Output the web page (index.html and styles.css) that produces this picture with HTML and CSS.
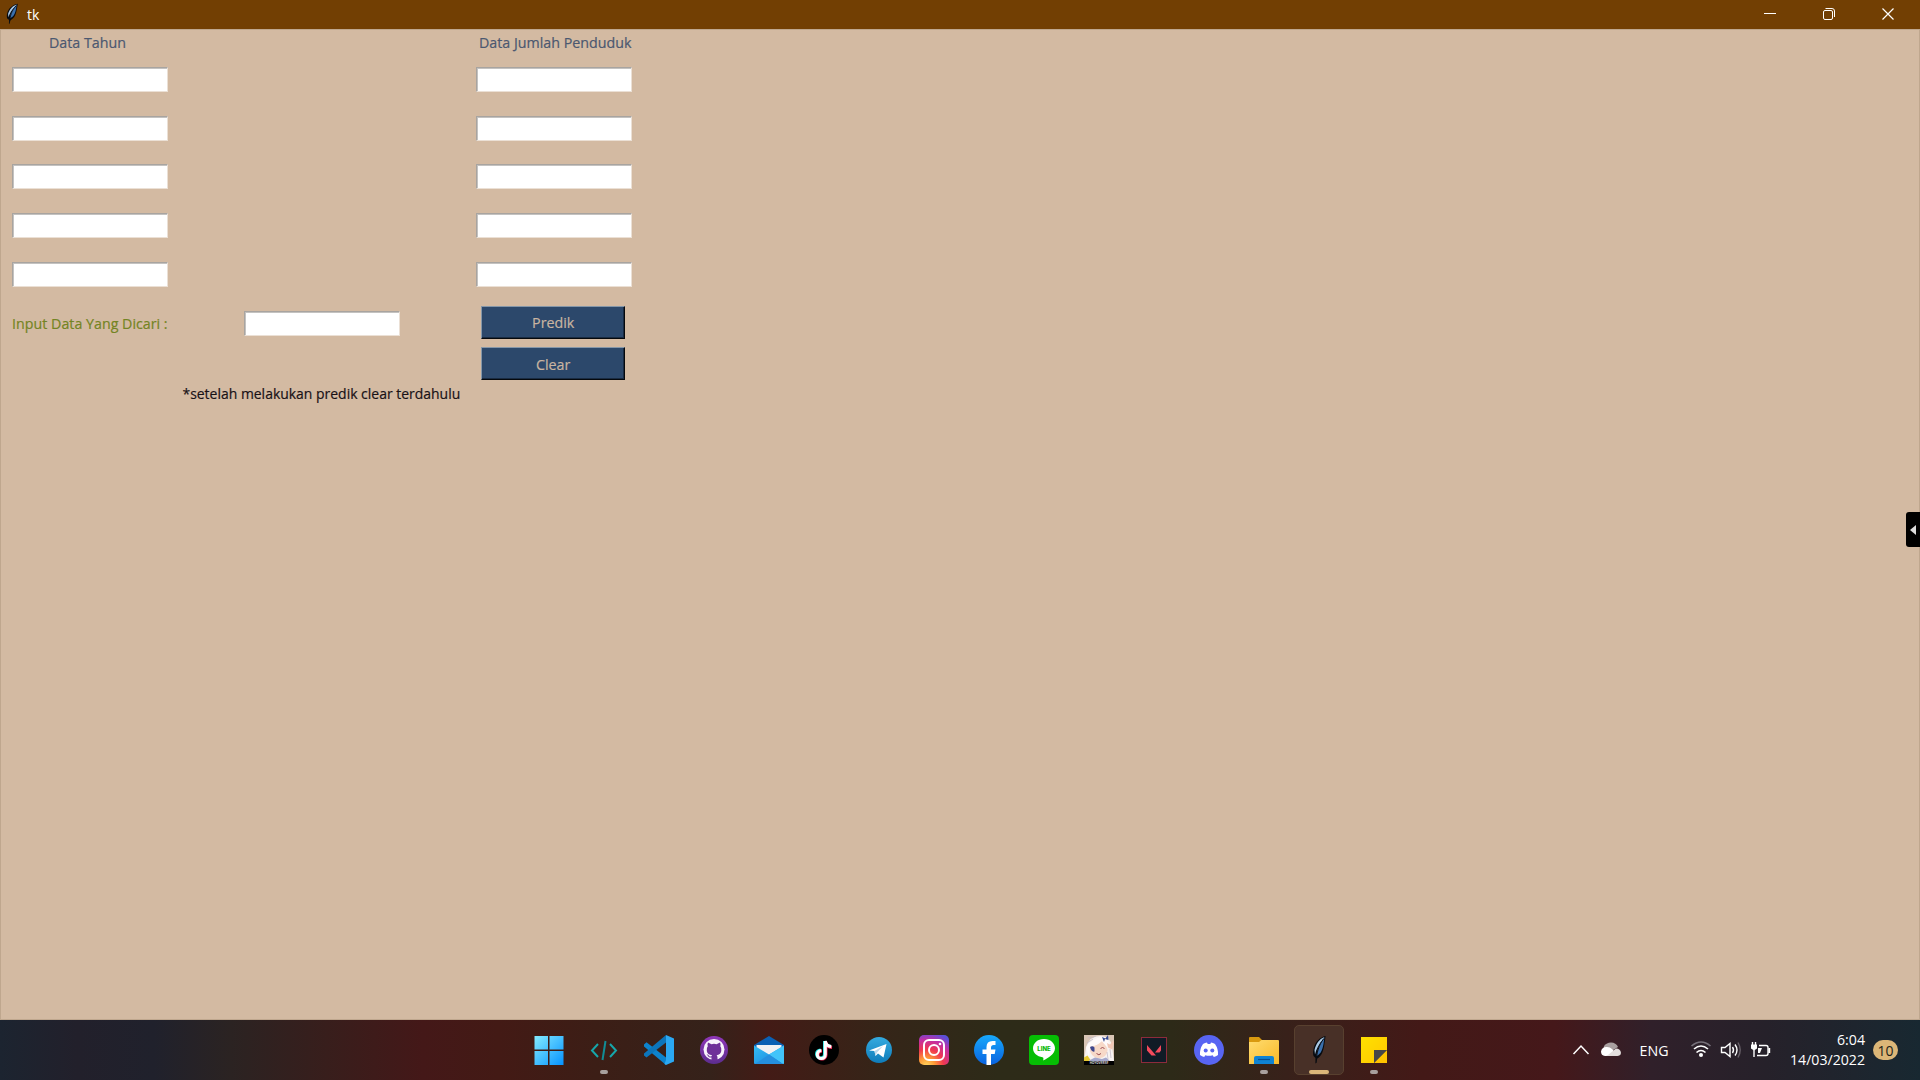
FILE: index.html
```html
<!DOCTYPE html>
<html lang="id">
<head>
<meta charset="utf-8">
<title>tk</title>
<link rel="stylesheet" href="styles.css">
</head>
<body>
<svg class="defs" width="0" height="0" aria-hidden="true">
  <defs>
    <linearGradient id="win" x1="0" y1="0" x2="1" y2="1"><stop offset="0" stop-color="#84ebff"/><stop offset="1" stop-color="#0592ff"/></linearGradient>
    <linearGradient id="purple" x1="0" y1="0" x2="0" y2="1"><stop offset="0" stop-color="#8f36b8"/><stop offset="1" stop-color="#5c2d8e"/></linearGradient>
    <linearGradient id="mailgrad" x1="0" y1="0" x2="1" y2="1"><stop offset="0" stop-color="#35bdf5"/><stop offset="1" stop-color="#1683dc"/></linearGradient>
    <linearGradient id="tele" x1="0" y1="0" x2="0" y2="1"><stop offset="0" stop-color="#33aadf"/><stop offset="1" stop-color="#0f7cba"/></linearGradient>
    <radialGradient id="insta" cx=".25" cy="1.05" r="1.15"><stop offset="0" stop-color="#ffdc62"/><stop offset=".25" stop-color="#ff9a36"/><stop offset=".5" stop-color="#f0394f"/><stop offset=".78" stop-color="#c22fa5"/><stop offset="1" stop-color="#5b4fd8"/></radialGradient>
    <linearGradient id="face" x1="0" y1="0" x2="0" y2="1"><stop offset="0" stop-color="#18a9fb"/><stop offset="1" stop-color="#0862e0"/></linearGradient>
    <linearGradient id="folder" x1="0" y1="0" x2="1" y2="1"><stop offset="0" stop-color="#ffdc70"/><stop offset="1" stop-color="#f9b928"/></linearGradient>
    <linearGradient id="note" x1="0" y1="0" x2="1" y2="1"><stop offset="0" stop-color="#ffe000"/><stop offset="1" stop-color="#ffc800"/></linearGradient>
    <symbol id="feather" viewBox="0 0 16 30">
      <path d="M14.600 1C9 2 4.500 7 3 12c-1 4-1.300 6-.5 9l2 2 .3 6 1.500-5.500C11 21 12.500 15 13.300 10z" fill="#080b10"/>
      <path d="M13.500 2C8 4 5 9 3.500 15l.5 4.500c1-5 4-11 8-15z" fill="#a9c8e4"/>
      <path d="M13.300 2.800C9 8 6.500 13 5.500 21c5-2 6.200-8 7-12z" fill="#3b70ad"/>
      <path d="M12.500 4C8 10 5.500 17 5 28" fill="none" stroke="#0a0d12" stroke-width="1"/>
    </symbol>
  </defs>
</svg>
<div class="desktop">
  <header class="titlebar">
    <svg class="app-icon" width="14" height="22" viewBox="0 0 16 30" preserveAspectRatio="none"><use href="#feather"/></svg>
    <span class="title">tk</span>
    <div class="controls">
      <svg class="control" viewBox="0 0 58 29"><path d="M22 13.500h12" stroke="#fff"/></svg>
      <svg class="control" viewBox="0 0 58 29"><rect x="22.500" y="10.500" width="9" height="9" rx="1.500" fill="none" stroke="#fff"/><path d="M24.500 8.500h6.500q2.500 0 2.500 2.500v6" fill="none" stroke="#fff"/></svg>
      <svg class="control" viewBox="0 0 58 29"><path d="M22.500 8.500l11 11m0-11l-11 11" stroke="#fff" stroke-width="1.200"/></svg>
    </div>
  </header>

  <main class="client">
    <div class="form">
      <div class="cell head head-year"><span class="label">Data Tahun</span></div><div class="cell"></div><div class="cell head head-total"><span class="label">Data Jumlah Penduduk</span></div>
      <div class="cell"><input class="entry"></div><div class="cell"></div><div class="cell"><input class="entry"></div>
      <div class="cell"><input class="entry"></div><div class="cell"></div><div class="cell"><input class="entry"></div>
      <div class="cell"><input class="entry"></div><div class="cell"></div><div class="cell"><input class="entry"></div>
      <div class="cell"><input class="entry"></div><div class="cell"></div><div class="cell"><input class="entry"></div>
      <div class="cell"><input class="entry"></div><div class="cell"></div><div class="cell"><input class="entry"></div>
      <div class="cell search"><span class="label">Input Data Yang Dicari :</span></div><div class="cell"><input class="entry"></div><div class="cell action"><button class="btn"><span class="label">Predik</span></button></div>
      <div class="cell"></div><div class="cell"></div><div class="cell action"><button class="btn"><span class="label">Clear</span></button></div>
      <div class="cell"></div><div class="cell note"><span class="label">*setelah melakukan predik clear terdahulu</span></div><div class="cell"></div>
    </div>
    <div class="side-tab"><svg width="6" height="10" viewBox="0 0 6 10"><path d="M6 0v10L0 5z" fill="#ddd"/></svg></div>
  </main>

  <footer class="taskbar">
    <nav class="apps">
      <div class="app"><svg class="icon" viewBox="0 0 30 30"><path d="M.5 1H14v13.500H.5zM15.500 1h14v13.500h-14zM.5 16H14v14H.5zM15.500 16h14v14h-14z" fill="url(#win)"/></svg></div>
      <div class="app running"><svg class="icon" viewBox="0 0 30 30"><path d="M9 9l-6 6.500L9 22M21 9l6 6.500-6 6.500" fill="none" stroke="#16a6aa" stroke-width="2"/><path d="M16.500 6l-3 19" stroke="#118d96" stroke-width="2"/></svg></div>
      <div class="app"><svg class="icon" viewBox="0 0 30 30"><path d="M0 9.500l2.500-2.200L22 22.500V30L0 11.500z" fill="#0d83cd"/><path d="M0 20.500l2.500 2L22 7.500V0L0 18.500z" fill="#0c75bb"/><path d="M22 0l8 3.500v23L22 30l-1.500-1 1.500-4z" fill="#2ba8f2"/></svg></div>
      <div class="app"><svg class="icon" viewBox="0 0 30 30"><circle cx="15" cy="15" r="14" fill="url(#purple)"/><circle cx="15" cy="14.500" r="10.500" fill="#f8f3fb"/><path d="M9 7.500l3.500 1.700q2.500-.7 5 0L21 7.500q1 2 .3 3.800 1.700 2 1 4.700-.8 3.800-4.700 4.300.9 1 .9 2.200v3h-6v-3h-1.500q-1.500 0-2.200-1.700-.6-1.100-1.300-1.300 1.500-.4 2.500 1.200.9 1.300 2.500.6.1-.6.600-1Q8.500 19.800 7.800 16q-.6-2.700 1-4.700-.7-1.800.2-3.800z" fill="#6f3099"/></svg></div>
      <div class="app"><svg class="icon" viewBox="0 0 30 30"><path d="M0 10L15 1l15 9v4H0z" fill="#0a60b4"/><path d="M2.500 10h25v10h-25z" fill="#f1f1f3"/><path d="M0 10.500L15 19.500l15-9V28q0 1-1 1H1q-1 0-1-1z" fill="url(#mailgrad)"/><path d="M15 19.500l15-9V28q0 1-1 1z" fill="#42c4fa"/><path d="M15 19.500L29 29H1z" fill="#258fdf"/></svg></div>
      <div class="app"><svg class="icon" viewBox="0 0 30 30"><circle cx="15" cy="15" r="15" fill="#000"/><g fill="none" stroke-width="3"><path d="M15.500 6v13a4 4 0 1 1-4-4M15.500 6q.5 5 6 5.500" stroke="#25e5e2"/><path d="M17 7v13a4 4 0 1 1-4-4M17 7q.5 5 6 5.500" stroke="#fa2d5c"/><path d="M16.300 6v13.500a4 4 0 1 1-4-4M16.300 6q.5 5 6 5.500" stroke="#fff"/></g></svg></div>
      <div class="app"><svg class="icon" viewBox="0 0 30 30"><circle cx="15" cy="15" r="13" fill="url(#tele)"/><path d="M5 15.500L22.500 9l-3 13.500-5.500-4-2.500 2.500-1-5z" fill="#fff"/><path d="M10.500 16l8.500-5-6 6.500-1.500 3.500z" fill="#bcd9ec"/></svg></div>
      <div class="app"><svg class="icon" viewBox="0 0 30 30"><rect width="30" height="30" rx="5" fill="url(#insta)"/><g fill="none" stroke="#fff" stroke-width="2"><rect x="5" y="5" width="20" height="20" rx="5"/><circle cx="15" cy="15" r="5"/></g><circle cx="21" cy="9" r="1.300" fill="#fff"/></svg></div>
      <div class="app"><svg class="icon" viewBox="0 0 30 30"><circle cx="15" cy="15" r="15" fill="url(#face)"/><path d="M12.500 30V19H8.500v-4.500h4V12q0-6 6-6h3v4h-2q-2.500 0-2.500 2.500v2h4.500l-.8 4.500H17v11z" fill="#fff"/></svg></div>
      <div class="app"><svg class="icon" viewBox="0 0 30 30"><rect width="30" height="30" rx="4" fill="#06bd04"/><path d="M15 4C8.500 4 4 8.300 4 13.300c0 4.700 4.100 8.200 9.500 9 1.500.2.700 1.700.8 3.200 5-2.500 11.700-6.500 11.700-12.200C26 8.300 21.500 4 15 4z" fill="#fff"/><text class="line-text" x="15" y="16" text-anchor="middle" fill="#06b806">LINE</text></svg></div>
      <div class="app"><svg class="icon" viewBox="0 0 30 30"><path d="M0 0h30v26H0z" fill="#d9c6b6"/><path d="M0 26L2 12Q6 0 17 1q9 0 11 10l2 15z" fill="#f7f3f2"/><path d="M4.500 11q8 0 13-5 5 4 6 9 0 7-9 8.500-8-1-10-12.500z" fill="#f7d9c8"/><path d="M2 13Q7 3 19 2q6 2 8 12-6-3-9-8-5 5-10 5l-2 3-1 8z" fill="#fffafa"/><path d="M6 12q2.500-1.500 4.500.5v4q-3 1-4.500-4.500z" fill="#3f478d"/><path d="M16.500 13.500q2-2 4 0M12.500 18.500q2.500 2.500 4.500 0" fill="none" stroke="#9b4b51"/><path d="M4 3q5 0 8-2M3 8l6-4M26 14l1 9M23 17l1 7" fill="none" stroke="#c5bdca" stroke-width=".8"/><path d="M18 2l3.500 1.500L24 0l.5 5-3.500-1-1 3z" fill="#354a91"/><path d="M23 8l3 1.500 3-4 1 2-2 7-4-2z" fill="#f0c7b5"/><path d="M0 22.500l3.500-2 3 4.500-2 1H0z" fill="#e6c832"/><path d="M6 25l5-2.500 7 1.500 4-1.500 4 3.500H5z" fill="#a4a7cb"/><path d="M0 26h30v4H0z"/><text class="game-text" x="15" y="29.300" text-anchor="middle" fill="#ddd">HOYOVERSE</text></svg></div>
      <div class="app"><svg class="icon" viewBox="0 0 30 30"><rect x="2.500" y="2.500" width="25" height="25" fill="#101b26" stroke="#8d2b3c"/><path d="M8 10l9 10.500h-4.500L8 15.500zM22 10v5.500l-1.500 2H16z" fill="#f34a5c"/></svg></div>
      <div class="app"><svg class="icon" viewBox="0 0 30 30"><circle cx="15" cy="15" r="15" fill="#5865f2"/><path d="M9 9q2-1.200 4-1.400l.7 1.400q1.300-.2 2.600 0l.7-1.400q2 .2 4 1.400 3.500 5 3 11-2 1.500-4.200 2l-1.100-1.800q-3.700 1-7.400 0L10.200 22Q8 21.500 6 20q-.5-6 3-11z" fill="#fff"/><circle cx="11.700" cy="15.500" r="2" fill="#5865f2"/><circle cx="18.300" cy="15.500" r="2" fill="#5865f2"/></svg></div>
      <div class="app running"><svg class="icon" viewBox="0 0 30 30"><path d="M0 3q0-1 1-1h9l3 3v5H0z" fill="#d99a10"/><path d="M0 7h10l2.500-2H29q1 0 1 1v23H0z" fill="url(#folder)"/><path d="M5 29v-6q0-2 2-2h16q2 0 2 2v6z" fill="#0f83d3"/><path d="M9 24.500h12" stroke="#084f91" stroke-width="1.200"/></svg></div>
      <div class="app active"><svg width="16" height="30" viewBox="0 0 16 30"><use href="#feather"/></svg></div>
      <div class="app running"><svg class="icon" viewBox="0 0 30 30"><path d="M2 2h26v13L15 28H2z" fill="url(#note)"/><path d="M28 15v13H15z" fill="#ffc400"/><path d="M15 15h13L15 28z" fill="#464648"/></svg></div>
    </nav>
    <div class="tray">
      <svg width="358" height="60" viewBox="1562 1020 358 60">
        <g fill="none" stroke="#fff" stroke-width="1.500"><path d="M1573.500 1054l7.500-8 7.500 8"/></g>
        <path d="M1604 1046q2.500-3.500 7-3.500 5 0 7 4.500l-8 5-7 1z" fill="#a9a0a0"/><path d="M1605 1056q-4-.5-4-4.500 1-5 6-4.500 3 0 5 2l6 6.500z" fill="#fff"/><path d="M1607 1055.800l9-7.300q4.500 0 5 4.500-.5 3-4 3z" fill="#e4dfde"/>
        <text class="tray-text" x="1639.500" y="1056" textLength="29" lengthAdjust="spacingAndGlyphs">ENG</text>
        <g fill="none" stroke="#fff" stroke-width="1.600"><path d="M1694 1049q7-6 14 0M1696.500 1052.500q4.500-4 9 0"/><path d="M1691.500 1046q9.500-8 19 0" stroke="#77717a"/></g><circle cx="1701" cy="1055" r="2" fill="#fff"/>
        <g fill="none" stroke="#fff" stroke-width="1.400"><path d="M1721.500 1047.500h3.500l5-4v13l-5-4h-3.500zM1732.500 1047q2 3 0 6M1735 1044.500q4 5.500 0 11"/><path d="M1738 1042.500q4.500 7.500 0 15" stroke="#655e66"/><path d="M1759 1045.500h7q2 0 2 2v6q0 2-2 2h-9M1769.500 1048v5M1754 1050v7M1752.500 1042v3M1755.500 1042v3"/></g><path d="M1751 1044.500h6v4l-3 2-3-2zM1758 1048h4l-2 5h-2z" fill="#fff"/>
        <text class="tray-text" x="1837" y="1045" textLength="28" lengthAdjust="spacingAndGlyphs">6:04</text>
        <text class="tray-text" x="1790" y="1064.500" textLength="75" lengthAdjust="spacingAndGlyphs">14/03/2022</text>
        <rect x="1873" y="1040" width="25" height="20" rx="10" fill="#dcb677"/><text class="badge-text" x="1885.500" y="1055.500" text-anchor="middle">10</text>
      </svg>
    </div>
  </footer>
</div>
</body>
</html>
```
FILE: styles.css
```css
* { box-sizing: border-box; }
body { margin: 0; font-family: "Open Sans", "Noto Sans", sans-serif; font-size: 15px; overflow: hidden; }
.defs { position: absolute; }
.desktop { width: 1920px; height: 1080px; display: flex; flex-direction: column; }
.titlebar { height: 29px; background: #723f03; color: #fff; display: flex; align-items: center; padding-left: 5px; flex: none; }
.app-icon { margin-top: -2px; }
.title { margin-left: 8px; font-size: 14px; }
.controls { margin-left: auto; display: flex; padding-right: 2px; }
.control { width: 58px; height: 29px; margin-right: 1px; }
.control:last-child { margin-right: 0; }
.client { flex: 1; background: #d3baa2; border: 1px solid #bfa78e; display: flex; justify-content: space-between; align-items: flex-start; }
.form { display: grid; grid-template-columns: 178px 285px 180px; grid-template-rows: 25px repeat(6, 48.8px) 34px 22px; }
.cell { display: flex; align-items: center; justify-content: center; white-space: nowrap; }
.entry { width: 156px; height: 25px; border: 1px solid; border-color: #a8a4a0 #ebe0d5 #ebe0d5 #a8a4a0; box-shadow: inset 1px 1px 0 #c4c2c0; background: #fff; padding: 0; outline: none; }
.label { display: inline-block; transform: scaleX(.95); -webkit-text-stroke: .2px currentColor; }
.head { color: #4b5870; padding-bottom: 2px; }
.head-year { padding-right: 5px; }
.head-total { padding-left: 2px; }
.search { color: #748423; }
.note { color: #181116; }
.note .label { transform: scaleX(.93); }
.action { padding: 0 2px 2px 0; }
.btn { width: 144px; height: 33px; padding: 0; background: #2c486b; color: #c9b5a1; font: inherit; border: 1px solid; border-color: #8597a9 #05080c #05080c #8597a9; box-shadow: inset -1px -1px 0 #192b42; display: flex; align-items: center; justify-content: center; }
.side-tab { width: 14px; height: 35px; margin-top: 482px; margin-right: -1px; background: #000; border-radius: 3px 0 0 3px; display: flex; align-items: center; justify-content: center; }
.taskbar { height: 60px; flex: none; display: flex; justify-content: space-between; padding-left: 523.5px; background: linear-gradient(90deg, #1c2430 0, #22202b 4%, #20212c 8%, #2b2322 12%, #381e1c 17%, #441818 22%, #431a15 26%, #3c1e16 31%, #35221a 37%, #431b16 40%, #352518 46%, #2d2b18 52%, #2d2a18 61%, #38211a 67%, #431917 74%, #45181a 81%, #30202a 86%, #26212a 92%, #182831 100%); }
.apps { display: flex; gap: 5px; align-items: center; }
.app { width: 50px; height: 50px; display: flex; align-items: center; justify-content: center; position: relative; border-radius: 5px; }
.icon { width: 30px; height: 30px; }
.active { background: #483027; border: 1px solid #58402f; }
.running::after, .active::after { content: ""; position: absolute; bottom: 1px; left: 21px; width: 8px; height: 4px; border-radius: 2px; background: #a8a09e; }
.active::after { bottom: 0; left: 14px; width: 20px; background: #dbb679; }
.tray { width: 358px; height: 60px; }
.tray-text { font-size: 15px; fill: #fff; }
.badge-text { font-size: 14px; fill: #221d18; }
.line-text { font: 800 6px Inter, sans-serif; }
.game-text { font: 700 3px Inter, sans-serif; }
```
